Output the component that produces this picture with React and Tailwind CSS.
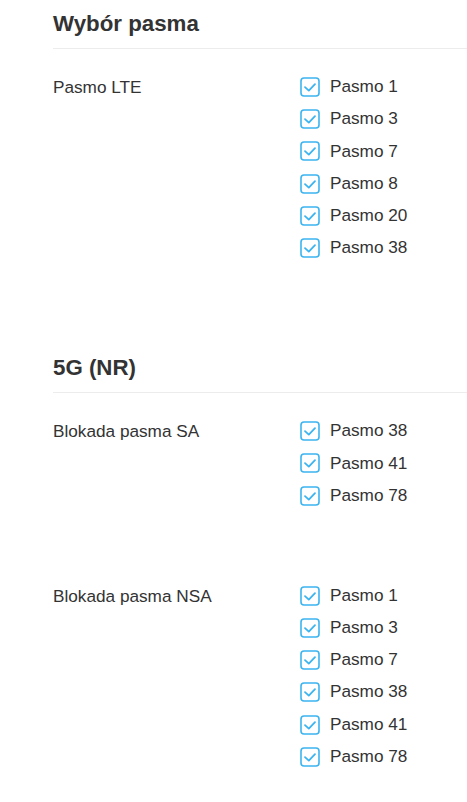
import React from 'react';

const sections = [
  {
    title: 'Wybór pasma',
    groups: [{ label: 'Pasmo LTE', bands: [1, 3, 7, 8, 20, 38] }],
  },
  {
    title: '5G (NR)',
    groups: [
      { label: 'Blokada pasma SA', bands: [38, 41, 78] },
      { label: 'Blokada pasma NSA', bands: [1, 3, 7, 38, 41, 78] },
    ],
  },
];

function CheckBox() {
  return (
    <svg width="20" height="20" viewBox="0 0 20 20" className="shrink-0">
      <rect x="1" y="1" width="18" height="18" rx="3" fill="white" stroke="#3cb4f0" strokeWidth="1.6" />
      <path d="M5 10.2 L8.8 13.6 L15 7.2" fill="none" stroke="#3cb4f0" strokeWidth="1.8" strokeLinecap="round" strokeLinejoin="round" />
    </svg>
  );
}

export default function App() {
  return (
    <div className="min-h-screen bg-white pl-[53px] text-[#333] font-[family-name:'Liberation_Sans',Arial,sans-serif]">
      {sections.map((section, si) => (
        <section key={si} className={si > 0 ? 'mt-[80px]' : ''}>
          {/* Header */}
          <h2 className="pt-[9px] pb-[9px] border-b border-[#ececec] text-[22.3px] leading-[30px] font-bold">
            {section.title}
          </h2>

          {section.groups.map((group, gi) => (
            <div key={gi} className={`flex ${gi === 0 ? 'mt-[22px]' : 'mt-[68px]'}`}>
              <div className="w-[247px] shrink-0 text-[17.2px] leading-[32px]">{group.label}</div>
              <div className="flex flex-col">
                {group.bands.map((b) => (
                  <label key={b} className="flex items-center gap-[10px] h-[32.2px] text-[17.2px]">
                    <CheckBox />
                    <span>Pasmo {b}</span>
                  </label>
                ))}
              </div>
            </div>
          ))}
        </section>
      ))}
    </div>
  );
}
